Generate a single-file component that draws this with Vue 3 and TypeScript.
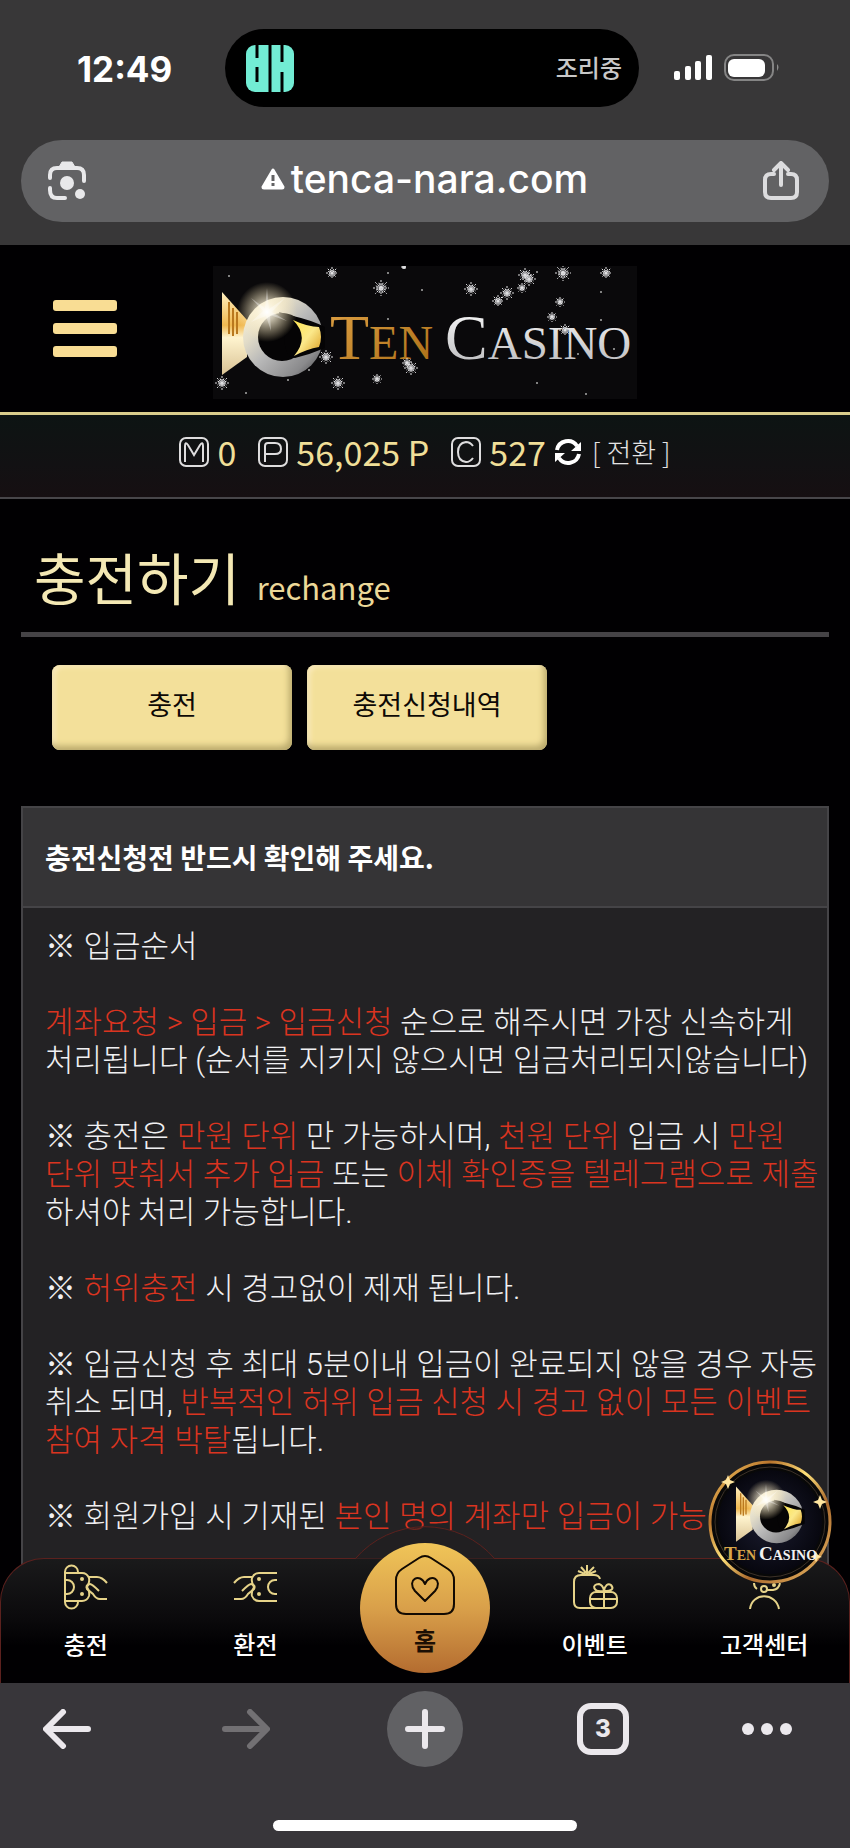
<script setup lang="ts">
interface Part {
  text: string
  red?: boolean
}

interface Flake {
  x: number
  y: number
  r: number
}

const notices: Part[][] = [
  [{ text: '※ 입금순서' }],
  [
    { text: '계좌요청 > 입금 > 입금신청', red: true },
    { text: ' 순으로 해주시면 가장 신속하게 처리됩니다 (순서를 지키지 않으시면 입금처리되지않습니다)' },
  ],
  [
    { text: '※ 충전은 ' },
    { text: '만원 단위', red: true },
    { text: ' 만 가능하시며, ' },
    { text: '천원 단위', red: true },
    { text: ' 입금 시 ' },
    { text: '만원 단위 맞춰서 추가 입금', red: true },
    { text: ' 또는 ' },
    { text: '이체 확인증을 텔레그램으로 제출', red: true },
    { text: ' 하셔야 처리 가능합니다.' },
  ],
  [{ text: '※ ' }, { text: '허위충전', red: true }, { text: ' 시 경고없이 제재 됩니다.' }],
  [
    { text: '※ 입금신청 후 최대 5분이내 입금이 완료되지 않을 경우 자동 취소 되며, ' },
    { text: '반복적인 허위 입금 신청 시 경고 없이 모든 이벤트 참여 자격 박탈', red: true },
    { text: '됩니다.' },
  ],
  [{ text: '※ 회원가입 시 기재된 ' }, { text: '본인 명의 계좌만 입금이 가능', red: true }],
]

const flakes: Flake[] = [
  [119, 7, 6], [168, 22, 8], [191, 1, 3], [113, 91, 7], [125, 117, 7], [164, 113, 5],
  [194, 97, 5], [198, 102, 7], [9, 117, 7], [258, 23, 7], [285, 35, 6], [294, 27, 7],
  [309, 22, 5], [312, 9, 7], [316, 13, 7], [350, 7, 8], [347, 36, 5], [339, 51, 5], [393, 7, 6], [352, 64, 6],
].map(([x, y, r]) => ({ x, y, r }))

const dots: number[][] = [
  [16, 10], [33, 127], [75, 114], [96, 104], [175, 7], [175, 53], [209, 24], [324, 6],
  [388, 26], [388, 54], [324, 117], [373, 128], [401, 83], [365, 88],
]

function spokes({ x, y, r }: Flake): string {
  let d = ''
  for (let i = 0; i < 8; i++) {
    const a = (i * Math.PI) / 8
    const k = i % 2 ? r * 0.7 : r
    const dx = Math.cos(a) * k
    const dy = Math.sin(a) * k
    d += `M${(x - dx).toFixed(1)} ${(y - dy).toFixed(1)}L${(x + dx).toFixed(1)} ${(y + dy).toFixed(1)}`
  }
  return d
}
</script>

<template>
  <div class="screen">
    <svg class="defs" width="0" height="0" aria-hidden="true">
      <defs>
        <linearGradient id="tailGold" x1="0" y1="0" x2="0" y2="1">
          <stop offset="0" stop-color="#fff0c0" />
          <stop offset=".4" stop-color="#f0b850" />
          <stop offset=".55" stop-color="#fff4cf" />
          <stop offset="1" stop-color="#d9c294" />
        </linearGradient>
        <linearGradient id="ringSilver" x1="0" y1="0" x2="1" y2="1">
          <stop offset="0" stop-color="#fffbe8" />
          <stop offset=".3" stop-color="#e2dcc8" />
          <stop offset=".5" stop-color="#b9b9b9" />
          <stop offset=".8" stop-color="#8a8a8c" />
          <stop offset="1" stop-color="#3c3c3e" />
        </linearGradient>
        <linearGradient id="eyeGold" x1="0" y1="0" x2="1" y2="1">
          <stop offset="0" stop-color="#ffe650" />
          <stop offset=".5" stop-color="#fbe88a" />
          <stop offset="1" stop-color="#d99a1c" />
        </linearGradient>
        <radialGradient id="flare">
          <stop offset="0" stop-color="#fff" />
          <stop offset=".3" stop-color="#fff6dc" stop-opacity=".75" />
          <stop offset="1" stop-color="#ffe9b0" stop-opacity="0" />
        </radialGradient>
        <linearGradient id="wordGold" x1="0" y1="0" x2="1" y2="1">
          <stop offset="0" stop-color="#dfa145" />
          <stop offset="1" stop-color="#a86c14" />
        </linearGradient>
        <linearGradient id="wordSilver" x1="0" y1="0" x2="0" y2="1">
          <stop offset="0" stop-color="#fff" />
          <stop offset="1" stop-color="#b5b5b8" />
        </linearGradient>
        <linearGradient id="rim" x1="0" y1="0" x2="1" y2="1">
          <stop offset="0" stop-color="#ffd66a" />
          <stop offset=".25" stop-color="#b8742c" />
          <stop offset=".45" stop-color="#ffe27a" />
          <stop offset=".65" stop-color="#a9682c" />
          <stop offset="1" stop-color="#f0c06a" />
        </linearGradient>
        <radialGradient id="disc">
          <stop offset="0" stop-color="#1b1c30" />
          <stop offset="1" stop-color="#07070f" />
        </radialGradient>
      </defs>
      <symbol id="fish" viewBox="0 0 120 133">
        <path d="M9 26L34 54V91L9 109Z" fill="url(#tailGold)" />
        <path d="M16 36V68M20 42V70M24 46V68" stroke="#b9781e" stroke-width="2" />
        <circle cx="70" cy="71" r="40" fill="url(#ringSilver)" />
        <circle cx="69" cy="71" r="24" fill="#050405" />
        <path d="M66 46L80 50Q98 54 112 61V82Q98 88 82 92Q70 90 72 70Z" fill="#050405" />
        <path d="M80 54Q95 61 106 61Q110 71 106 81Q94 83 81 90Q97 71 80 54Z" fill="url(#eyeGold)" />
        <circle cx="54" cy="46" r="30" fill="url(#flare)" />
        <path d="M54 22L56 43L72 32L59 46L74 55L57 49L58 65L53 50L38 56L50 45L38 32L52 42Z" fill="#fff" opacity=".35" />
      </symbol>
    </svg>

    <header class="chrome-top">
      <div class="status">
        <time class="clock">12:49</time>
        <div class="island">
          <svg width="48" height="47" viewBox="0 0 48 47" aria-hidden="true">
            <rect width="48" height="47" rx="9" fill="#72ecd4" />
            <path d="M11 0V13M11 22V37M24 0V47M36 0V17M36 27V47" stroke="#000" stroke-width="3" />
          </svg>
          <span>조리중</span>
        </div>
        <svg class="signal" width="106" height="28" viewBox="0 0 106 28" role="img" aria-label="신호와 배터리">
          <g fill="#fff">
            <rect x="0" y="17" width="6" height="9" rx="2" />
            <rect x="11" y="12" width="6" height="14" rx="2" />
            <rect x="21" y="7" width="6" height="19" rx="2" />
            <rect x="32" y="1" width="6" height="25" rx="2" />
            <rect x="54" y="5" width="37" height="18" rx="6" />
            <path d="M103 10q3 3 0 7z" fill="#8c8c8c" />
          </g>
          <rect x="51" y="1" width="48" height="25" rx="9" fill="none" stroke="#858585" stroke-width="2" />
        </svg>
      </div>
      <div class="address">
        <button class="icon-btn" aria-label="카메라 검색">
          <svg width="40" height="40" viewBox="0 0 40 40">
            <g fill="none" stroke="#e8e8ea" stroke-width="4" stroke-linecap="round">
              <path d="M3 17V14Q3 7 10 7H30Q37 7 37 14V20" />
              <path d="M3 27V29Q3 37 10 37H18" />
            </g>
            <path d="M12 6L15 1H25L28 6Z" fill="#e8e8ea" stroke="#e8e8ea" stroke-linejoin="round" />
            <circle cx="20" cy="22" r="7" fill="#e8e8ea" />
            <circle cx="33" cy="33" r="5" fill="#e8e8ea" />
          </svg>
        </button>
        <a class="url" href="#">
          <svg width="24" height="22" viewBox="0 0 24 22" aria-hidden="true">
            <path d="M12 2L22 19Q22 20 21 20H3Q2 20 2 19Z" fill="#fff" stroke="#fff" stroke-width="3" stroke-linejoin="round" />
            <path d="M12 7V13M12 15V18" stroke="#626264" stroke-width="3" />
          </svg>
          tenca-nara.com
        </a>
        <button class="icon-btn" aria-label="공유">
          <svg width="38" height="40" viewBox="0 0 38 40" fill="none" stroke="#dcdcde" stroke-width="4" stroke-linecap="round" stroke-linejoin="round">
            <path d="M12 13H9Q3 13 3 19V31Q3 37 9 37H29Q35 37 35 31V19Q35 13 29 13H26" />
            <path d="M19 24V3M12 9L19 2L26 9" />
          </svg>
        </button>
      </div>
    </header>

    <div class="site">
      <header class="brand">
        <button class="menu" aria-label="메뉴"><i></i><i></i><i></i></button>
        <svg class="logo" width="424" height="133" viewBox="0 0 424 133" role="img" aria-label="Ten Casino">
          <rect width="424" height="133" fill="#0a090b" />
          <use href="#fish" x="0" y="0" width="120" height="133" />
          <g class="word">
            <text x="117" y="93" font-size="64" fill="url(#wordGold)">T<tspan font-size="48">EN</tspan></text>
            <text x="232" y="93" font-size="64" fill="url(#wordSilver)">C<tspan font-size="47">ASINO</tspan></text>
          </g>
          <g v-for="(f, i) in flakes" :key="'f' + i">
            <circle :cx="f.x" :cy="f.y" :r="f.r / 2" fill="#bdbdc0" opacity=".45" />
            <path :d="spokes(f)" stroke="#e2e2e4" stroke-width="1" stroke-dasharray="2 1" />
          </g>
          <circle v-for="(d, i) in dots" :key="'d' + i" :cx="d[0]" :cy="d[1]" r="1" fill="#aaa" />
        </svg>
      </header>

      <div class="balance">
        <span class="pair">
          <svg width="30" height="30" viewBox="0 0 30 30"><rect x="1" y="1" width="28" height="28" rx="6" /><path d="M6 25V9Q6 4 9 8L15 18L21 8Q24 4 24 9V25" /></svg>
          <b>0</b>
        </span>
        <span class="pair">
          <svg width="30" height="30" viewBox="0 0 30 30"><rect x="1" y="1" width="28" height="28" rx="6" /><path d="M7 25V9Q7 6 10 6H17Q23 6 23 12Q23 17 17 17H7" /></svg>
          <b>56,025 P</b>
        </span>
        <span class="pair">
          <svg width="30" height="30" viewBox="0 0 30 30"><rect x="1" y="1" width="28" height="28" rx="6" /><path d="M22 9Q19 5 15 5Q7 6 7 15Q7 24 15 25Q19 25 22 21" /></svg>
          <b>527</b>
          <button class="convert">
            <svg class="refresh" width="28" height="28" viewBox="0 0 28 28" aria-hidden="true">
              <path d="M3 12A11 11 0 0 1 23 8M25 16A11 11 0 0 1 5 20" fill="none" stroke="#fff" stroke-width="4" />
              <path d="M27 4V13H17ZM1 24V15H11Z" fill="#fff" />
            </svg>
            [ 전환 ]
          </button>
        </span>
      </div>

      <main>
        <h1>충전하기 <small>rechange</small></h1>
        <div class="tabs">
          <button>충전</button>
          <button>충전신청내역</button>
        </div>
        <section class="panel">
          <h2>충전신청전 반드시 확인해 주세요.</h2>
          <div class="notices">
            <p v-for="(line, i) in notices" :key="i">
              <span v-for="(part, j) in line" :key="j" :class="{ red: part.red }">{{ part.text }}</span>
            </p>
          </div>
        </section>
      </main>

      <nav class="dock">
        <svg class="bump" width="140" height="33" viewBox="0 0 140 33" aria-hidden="true">
          <path d="M0 33A92 92 0 0 1 140 33Z" fill="#1f1e1f" fill-opacity=".6" />
          <path d="M0 33A92 92 0 0 1 140 33" fill="none" stroke="#5c211e" />
        </svg>
        <a href="#">
          <svg class="line" width="46" height="46" viewBox="-1 -1 46 46">
            <path d="M1 8V7a6 6 0 0 1 13 0v1M1 36v1a6 6 0 0 0 13 0v-1M1 7V37M1 8H18Q23 8 25 13Q26 17 23 22Q26 27 25 31Q23 36 18 36H1M1 15h2a7 7 0 0 1 0 14H1" />
            <path d="M25 12H33Q38 12 43 18M43 34H36Q32 34 29 29L23 24Q21 20 26 19Q28 19 35 26" />
            <circle cx="18" cy="14" r="1" /><circle cx="18" cy="29" r="1" />
          </svg>
          <span>충전</span>
        </a>
        <a href="#">
          <svg class="line" width="46" height="46" viewBox="-1 -1 46 46">
            <path d="M44 8H26Q21 8 19 13Q18 17 21 22Q18 27 19 31Q21 36 26 36H44M44 15h-2a7 7 0 0 0 0 14h2" />
            <path d="M19 12H11Q6 12 1 18M1 34H8Q12 34 15 29L21 24Q23 20 18 19Q16 19 9 26" />
            <circle cx="26" cy="14" r="1" /><circle cx="26" cy="29" r="1" />
          </svg>
          <span>환전</span>
        </a>
        <a class="home" href="#">
          <svg width="62" height="62" viewBox="0 0 62 62" fill="none" stroke="#120a02" stroke-width="2">
            <path d="M25 4Q31 0 37 4L54 15Q60 19 60 26V50Q60 60 50 60H12Q2 60 2 50V26Q2 19 8 15Z" />
            <path d="M31 47L21 37C12 26 26 18 31 30C36 18 50 26 41 37Z" stroke-linejoin="round" />
          </svg>
          <span>홈</span>
        </a>
        <a href="#">
          <svg class="line" width="46" height="46" viewBox="-1 -1 46 46">
            <path d="M27 14Q26 10 21 10H8Q1 10 1 17V37Q1 43 7 43H37M14 9V0M14 9L8 2M14 9L21 2M12 9L5 6M16 9L23 6" />
            <rect x="17" y="27" width="27" height="16" rx="6" />
            <path d="M31 27V43M18 34H43M31 26C20 28 18 19 26 19Q30 20 31 26C32 20 35 18 38 20Q43 26 31 26" />
          </svg>
          <span>이벤트</span>
        </a>
        <a href="#">
          <svg class="line" width="46" height="46" viewBox="-1 -1 46 46">
            <path d="M8 44C10 27 34 27 37 44M12 18Q12 22 15 24M25 25H31Q37 24 38 18" />
            <circle cx="22" cy="24" r="3" /><circle cx="32" cy="20" r="1" />
          </svg>
          <span>고객센터</span>
        </a>
      </nav>

      <a class="badge" href="#" aria-label="Ten Casino">
        <svg width="124" height="124" viewBox="0 0 124 124">
          <circle cx="62" cy="62" r="61" fill="#080808" />
          <circle cx="62" cy="62" r="60" fill="none" stroke="url(#rim)" stroke-width="3" />
          <circle cx="62" cy="62" r="55" fill="none" stroke="#3d3228" />
          <circle cx="62" cy="62" r="52" fill="url(#disc)" />
          <use href="#fish" x="22" y="9" width="80" height="89" />
          <path d="M20 15L22 20L27 22L22 24L20 29L18 24L13 22L18 20ZM112 35L114 40L119 42L114 44L112 49L110 44L105 42L110 40ZM108 92L110 95L114 97L110 98L108 102L106 98L102 97L106 95Z" fill="#ffe6a0" />
          <g class="word bold">
            <text x="16" y="100" font-size="19" fill="#d7a64a">T<tspan font-size="14">EN</tspan></text>
            <text x="51" y="100" font-size="19" fill="#f2f2f2">C<tspan font-size="14">ASINO</tspan></text>
          </g>
        </svg>
      </a>
    </div>

    <footer class="chrome-bottom">
      <div class="tools">
        <button aria-label="뒤로">
          <svg width="48" height="40" viewBox="0 0 48 40" fill="none" stroke="#ebe8ec" stroke-width="6" stroke-linecap="round" stroke-linejoin="round"><path d="M45 20H4M20 3L3 20L20 37" /></svg>
        </button>
        <button aria-label="앞으로" disabled>
          <svg width="48" height="40" viewBox="0 0 48 40" fill="none" stroke="#727073" stroke-width="6" stroke-linecap="round" stroke-linejoin="round"><path d="M3 20H44M28 3L45 20L28 37" /></svg>
        </button>
        <button class="plus" aria-label="새 탭">
          <svg width="40" height="40" viewBox="0 0 40 40" stroke="#ebe8ec" stroke-width="6" stroke-linecap="round"><path d="M3 20H37M20 3V37" /></svg>
        </button>
        <button class="count" aria-label="탭 3개">3</button>
        <button aria-label="더보기">
          <svg width="50" height="12" viewBox="0 0 50 12" fill="#ebe8ec"><circle cx="6" cy="6" r="6" /><circle cx="25" cy="6" r="6" /><circle cx="44" cy="6" r="6" /></svg>
        </button>
      </div>
      <div class="indicator"></div>
    </footer>
  </div>
</template>

<style>
body {
  background: #38373a;
}
</style>

<style scoped>
* {
  box-sizing: border-box;
}
.screen {
  min-height: 100vh;
  display: flex;
  flex-direction: column;
  color: #fff;
  font-family: "Noto Sans CJK KR", "Noto Sans", sans-serif;
}
.defs {
  position: absolute;
}
button {
  padding: 0;
  border: 0;
  background: none;
  color: inherit;
  font: inherit;
}
a {
  color: inherit;
  text-decoration: none;
}
svg {
  display: block;
  flex: none;
}
.chrome-top {
  background: #383738;
  padding: 29px 21px 23px;
}
.status {
  display: grid;
  grid-template-columns: 204fr 414px 190fr;
  align-items: center;
  margin-bottom: 33px;
}
.clock {
  padding: 2px 0 0 56px;
  font: 700 35px/40px Inter, sans-serif;
}
.island {
  height: 78px;
  padding: 0 17px 0 21px;
  border-radius: 39px;
  background: #000;
  display: flex;
  align-items: center;
  justify-content: space-between;
  color: #c8c8c8;
  font-size: 24px;
  font-weight: 500;
  line-height: 36px;
}
.island span {
  padding-bottom: 2px;
}
.signal {
  margin-left: 35px;
}
.address {
  height: 82px;
  padding: 0 29px 0 26px;
  border-radius: 41px;
  background: #626264;
  display: flex;
  align-items: center;
  justify-content: space-between;
}
.url {
  display: flex;
  align-items: center;
  gap: 6px;
  padding-bottom: 4px;
  font: 500 39px/44px Inter, sans-serif;
}
.site {
  position: relative;
  flex: 1;
  display: flex;
  flex-direction: column;
  background: #010002;
  overflow: hidden;
}
.brand {
  display: grid;
  grid-template-columns: 1fr 424px 1fr;
  align-items: center;
  padding: 21px 0 13px;
  border-bottom: 3px solid #d9cd8c;
}
.menu {
  justify-self: start;
  width: 64px;
  margin: 0 0 8px 53px;
  display: grid;
  gap: 12px;
}
.menu i {
  height: 11px;
  border-radius: 3px;
  background: #f9dd94;
}
.word {
  font-family: "Liberation Serif", serif;
}
.bold {
  font-weight: 700;
}
.balance {
  height: 84px;
  padding-bottom: 8px;
  border-bottom: 2px solid #48464a;
  background: linear-gradient(#0d1413, #121113 60%, #160f12);
  display: flex;
  align-items: center;
  justify-content: center;
  gap: 22px;
}
.pair {
  display: flex;
  align-items: center;
  gap: 8px;
}
.pair svg:not(.refresh) {
  fill: none;
  stroke: #deddde;
  stroke-width: 2;
}
.pair b {
  color: #f0df98;
  font-weight: 400;
  font-size: 34px;
  line-height: 40px;
}
.convert {
  display: flex;
  align-items: center;
  gap: 10px;
  color: #e4e4e4;
  font-size: 27px;
  font-weight: 300;
  line-height: 36px;
}
main {
  flex: 1;
  padding: 0 21px;
  display: flex;
  flex-direction: column;
}
h1 {
  margin: 0;
  padding: 36px 13px 15px;
  border-bottom: 5px solid #454346;
  color: #f4e8b4;
  font-size: 56px;
  line-height: 82px;
  font-weight: 400;
}
small {
  margin-left: 4px;
  font-size: 31px;
  line-height: 32px;
  color: #ecd898;
}
.tabs {
  display: flex;
  gap: 15px;
  padding: 28px 31px 56px;
}
.tabs button {
  width: 240px;
  height: 85px;
  padding-bottom: 7px;
  border-radius: 8px;
  background: #f3e09a;
  box-shadow: inset -3px -4px 6px #b9a96c, inset 3px 2px 5px #fbecc0;
  color: #0d0905;
  font-size: 27px;
  line-height: 40px;
  font-weight: 400;
}
.panel {
  flex: 1;
  border: 2px solid #454447;
  border-bottom: 0;
  background: #232224;
}
h2 {
  margin: 0;
  padding: 24px 22px;
  border-bottom: 2px solid #454447;
  background: #353436;
  font-size: 28px;
  line-height: 50px;
  font-weight: 700;
}
.notices {
  padding: 20px 0 0 22px;
  word-break: keep-all;
  color: #f0f0f2;
  font-family: Roboto, "Noto Sans CJK KR", sans-serif;
  font-size: 31px;
  line-height: 38px;
  font-weight: 300;
}
.notices p {
  margin: 0 0 38px;
}
.red {
  color: #da3420;
}
.dock {
  position: absolute;
  left: 0;
  right: 0;
  bottom: 0;
  height: 125px;
  border: 1px solid #5c211e;
  border-bottom: 0;
  border-radius: 44px 44px 0 0;
  background: linear-gradient(#1a1a1b, #0a090b 50%, #010002 70%);
  display: grid;
  grid-template-columns: repeat(5, 1fr);
  text-align: center;
  font-size: 24px;
  line-height: 36px;
  font-weight: 500;
}
.dock a {
  padding-top: 5px;
  display: flex;
  flex-direction: column;
  align-items: center;
  gap: 16px;
}
.bump {
  position: absolute;
  left: 50%;
  top: -33px;
  margin-left: -70px;
}
.line {
  fill: none;
  stroke: #e6d389;
  stroke-width: 2;
}
.dock .home {
  position: absolute;
  left: 50%;
  top: -16px;
  width: 130px;
  height: 130px;
  margin-left: -65px;
  padding-top: 11px;
  gap: 6px;
  border-radius: 50%;
  background: linear-gradient(#f0c558, #d9a04a 50%, #b46c30);
  color: #1c0f04;
  font-weight: 700;
}
.home + a {
  grid-column: 4;
}
.badge {
  position: absolute;
  right: 18px;
  bottom: 99px;
}
.chrome-bottom {
  background: #38363a;
  padding: 8px 0 17px;
}
.tools {
  display: grid;
  grid-template-columns: 134fr 224fr 134fr 222fr 106fr 30fr;
  align-items: center;
  justify-items: center;
  margin-bottom: 53px;
}
.plus {
  width: 76px;
  height: 76px;
  border-radius: 50%;
  background: #616164;
  display: grid;
  place-items: center;
}
.count {
  width: 52px;
  height: 52px;
  border: 6px solid #ebe8ec;
  border-radius: 14px;
  color: #ebe8ec;
  font: 800 24px/40px Inter, sans-serif;
}
.indicator {
  width: 304px;
  height: 11px;
  margin: 0 auto;
  border-radius: 6px;
  background: #fff;
}
</style>
